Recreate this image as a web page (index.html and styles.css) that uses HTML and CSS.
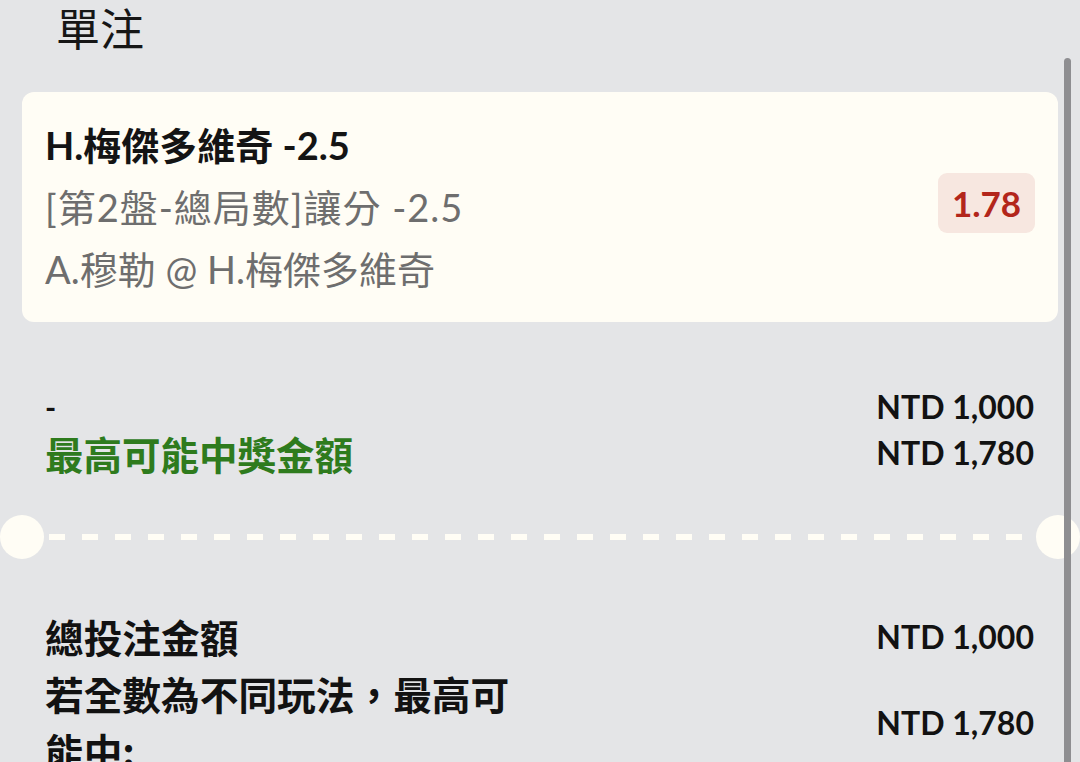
FILE: index.html
```html
<!DOCTYPE html>
<html lang="zh-Hant">
<head>
<meta charset="utf-8">
<title>單注</title>
<link rel="stylesheet" href="styles.css">
</head>
<body>
<div class="page">
  <h1 class="title">單注</h1>
  <div class="wrap">
    <div class="card">
      <div class="card-info">
        <div class="sel">H.梅傑多維奇 -2.5</div>
        <div class="market">[第2盤-總局數]讓分 -2.5</div>
        <div class="match">A.穆勒 @ H.梅傑多維奇</div>
      </div>
      <div class="odds">1.78</div>
    </div>
    <div class="stake">
      <div class="stake-left">
        <div class="dash-label">-</div>
        <div class="win-label">最高可能中獎金額</div>
      </div>
      <div class="stake-right">
        <div>NTD 1,000</div>
        <div>NTD 1,780</div>
      </div>
    </div>
  </div>
  <div class="divider">
    <span class="notch"></span>
    <span class="dashes"></span>
    <span class="notch"></span>
  </div>
  <div class="wrap">
    <div class="summary">
      <div class="sum-row">
        <div class="sum-label">總投注金額</div>
        <div class="sum-value">NTD 1,000</div>
      </div>
      <div class="sum-row">
        <div class="sum-label">若全數為不同玩法，最高可能中:</div>
        <div class="sum-value">NTD 1,780</div>
      </div>
    </div>
  </div>
  <div class="scrollbar"></div>
</div>
</body>
</html>
```
FILE: styles.css
```css
html, body {
  margin: 0;
  padding: 0;
  background: #e4e5e7;
  overflow: hidden;
}
body {
  width: 1080px;
  height: 762px;
  font-family: Lato, "Noto Sans CJK TC", sans-serif;
  color: #121212;
}
.page {
  position: relative;
  width: 1080px;
  height: 762px;
  overflow: hidden;
}
.title {
  margin: 0 0 38px 0;
  padding-left: 56px;
  height: 54px;
  line-height: 54px;
  font-family: "Noto Sans CJK TC", sans-serif;
  font-size: 44px;
  font-weight: 400;
  color: #161616;
}
.wrap {
  padding: 0 22px;
}
.card {
  background: #fffdf5;
  border-radius: 12px;
  height: 230px;
  box-sizing: border-box;
  padding: 22px 23px 22px 23px;
  display: flex;
  align-items: center;
  justify-content: space-between;
}
.card-info {
  display: flex;
  flex-direction: column;
}
.sel, .market, .match {
  line-height: 62px;
  height: 62px;
  font-size: 38px;
}
.sel {
  font-weight: 700;
  color: #141414;
}
.market, .match {
  font-weight: 400;
  color: #6e6e6e;
}
.market {
  letter-spacing: 1px;
}
.odds {
  width: 97px;
  height: 60px;
  border-radius: 9px;
  background: #f7e7e0;
  color: #b3261b;
  font-size: 35px;
  font-weight: 700;
  display: flex;
  align-items: center;
  justify-content: center;
  margin-top: -9px;
}
.stake {
  margin-top: 62px;
  padding: 0 24px 0 23px;
  display: flex;
  justify-content: space-between;
}
.stake-left, .stake-right {
  line-height: 46px;
}
.dash-label {
  height: 46px;
  font-size: 30px;
  font-weight: 700;
}
.win-label {
  height: 46px;
  font-size: 38.5px;
  font-weight: 700;
  color: #2e7b1d;
  font-family: "Noto Sans CJK TC", sans-serif;
}
.stake-right {
  text-align: right;
  font-size: 32px;
  font-weight: 700;
}
.stake-right div {
  height: 46px;
}
.divider {
  margin-top: 39px;
  height: 44px;
  display: flex;
  align-items: center;
}
.notch {
  width: 44px;
  height: 44px;
  border-radius: 50%;
  background: #fffdf5;
  flex: none;
}
.dashes {
  flex: 1;
  height: 6px;
  margin: 0 4px 0 5px;
  background: repeating-linear-gradient(90deg, #fffdf5 0, #fffdf5 16px, transparent 16px, transparent 33px);
}
.summary {
  margin-top: 49px;
  padding: 0 24px 0 23px;
}
.sum-row {
  display: flex;
  justify-content: space-between;
  align-items: center;
}
.sum-label {
  width: 480px;
  font-size: 38.7px;
  line-height: 57px;
  font-weight: 700;
  font-family: "Noto Sans CJK TC", sans-serif;
  color: #121212;
}
.sum-value {
  font-size: 32px;
  font-weight: 700;
  text-align: right;
}
.scrollbar {
  position: absolute;
  left: 1064px;
  top: 58px;
  width: 7px;
  height: 720px;
  border-radius: 4px;
  background: #8e8e91;
  z-index: 2;
}
```
